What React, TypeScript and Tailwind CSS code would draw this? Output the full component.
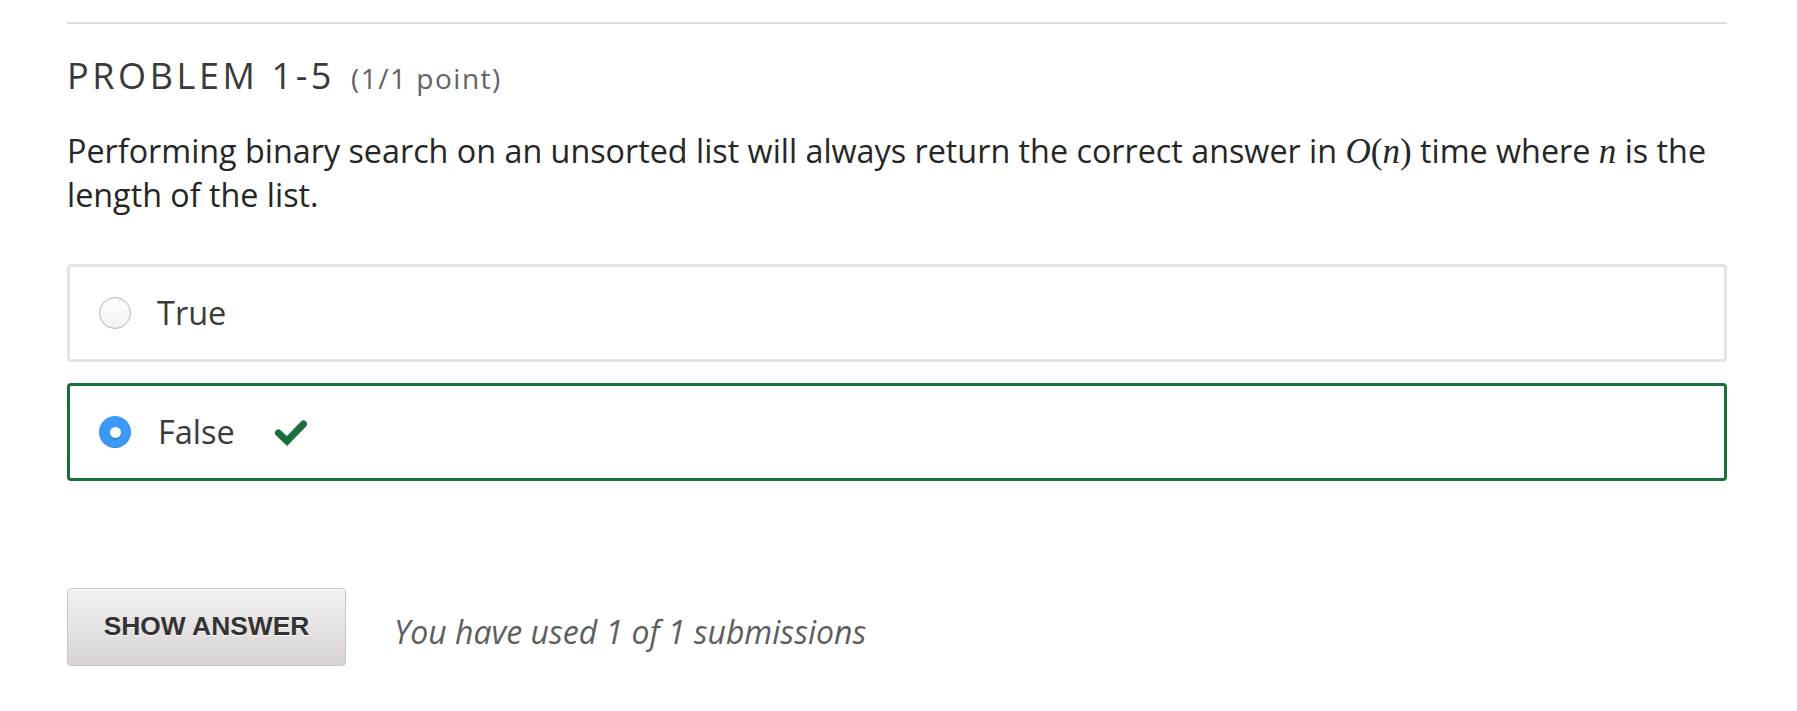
import React from "react";

function Check() {
  return (
    <svg width="34" height="27" viewBox="0 0 34 27" className="ml-[39px]" aria-hidden>
      <path d="M4.5 14 L13 22 L29.5 5" fill="none" stroke="#1b6f3a" strokeWidth="7" strokeLinecap="round" strokeLinejoin="miter" />
    </svg>
  );
}

function Radio({ checked }: { checked: boolean }) {
  if (checked) {
    return (
      <span className="flex h-[32px] w-[32px] shrink-0 items-center justify-center rounded-full bg-[#3b99fc] shadow-[inset_0_-1px_1px_rgba(0,0,0,0.15)]">
        <span className="h-[11px] w-[11px] rounded-full bg-white shadow-[0_1px_1px_rgba(0,0,0,0.35)]" />
      </span>
    );
  }
  return (
    <span className="block h-[32px] w-[32px] shrink-0 rounded-full border border-[#b9b9b9] bg-gradient-to-b from-[#ffffff] to-[#f1f1f1] shadow-[inset_0_1px_1px_rgba(0,0,0,0.06)]" />
  );
}

export default function App() {
  const sans = { fontFamily: '"Open Sans", "Noto Sans", sans-serif' };
  const serif = { fontFamily: '"Liberation Serif", "DejaVu Serif", serif' };
  return (
    <div className="min-h-[711px] w-full bg-white" style={sans}>
      <div className="ml-[67px] w-[1660px]">
        <div className="h-[22px]" />
        <div className="h-[2px] bg-[#dedede]" />
        <h3 className="mt-[31px] text-[36px] leading-[42px] font-normal tracking-[3.6px] text-[#3a3a3a]">
          PROBLEM 1-5
          <span className="ml-[16px] text-[28px] tracking-[1.5px] text-[#636363]">(1/1 point)</span>
        </h3>
        <p className="mt-[30px] text-[32.3px] leading-[43.5px] text-[#262626]">
          Performing binary search on an unsorted list will always return the correct answer in{" "}
          <span className="text-[35px] leading-none" style={serif}>
            <i>O</i>(<i>n</i>)
          </span>{" "}
          time where{" "}
          <span className="text-[35px] leading-none" style={serif}>
            <i>n</i>
          </span>{" "}
          is the length of the list.
        </p>
        <div className="mt-[48px] flex h-[98px] items-center rounded-[4px] border-[3px] border-[#e4e4e4] pl-[29px]">
          <Radio checked={false} />
          <span className="ml-[26px] text-[32.5px] text-[#3c3c3c]">True</span>
        </div>
        <div className="mt-[21px] flex h-[98px] items-center rounded-[4px] border-[3px] border-[#1b6f3a] pl-[29px]">
          <Radio checked={true} />
          <span className="ml-[27px] text-[32.5px] text-[#3c3c3c]">False</span>
          <Check />
        </div>
        <div className="mt-[107px] flex items-center">
          <button
            className="flex h-[78px] w-[279px] items-center justify-center rounded-[4px] border border-[#cbc6c6] bg-gradient-to-b from-[#f2f2f2] to-[#d8d3d3] text-[26.4px] font-bold text-[#333333] shadow-[inset_0_1px_0_#ffffff] [text-shadow:0_1px_0_#ffffff]"
            style={{ fontFamily: '"Liberation Sans", Arial, sans-serif' }}
          >
            SHOW ANSWER
          </button>
          <span className="ml-[48px] mt-[10px] text-[32px] italic text-[#5e5e5e]">You have used 1 of 1 submissions</span>
        </div>
      </div>
    </div>
  );
}
